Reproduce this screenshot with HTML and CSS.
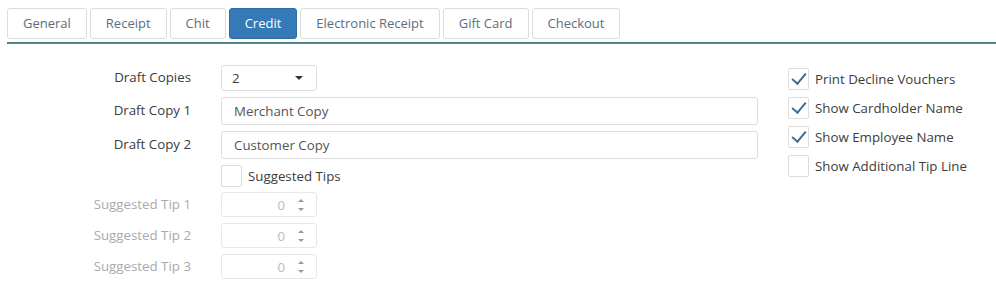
FILE: index.html
```html
<!DOCTYPE html>
<html lang="en">
<head>
    <meta charset="UTF-8">
    <title>Credit Settings</title>
    <link rel="stylesheet" href="styles.css">
</head>
<body>
    <div class="page">
        <ul class="tabs">
            <li>General</li>
            <li>Receipt</li>
            <li>Chit</li>
            <li class="active">Credit</li>
            <li>Electronic Receipt</li>
            <li>Gift Card</li>
            <li>Checkout</li>
        </ul>
        <div class="panel">
            <div class="left">
                <div class="row">
                    <label>Draft Copies</label>
                    <div class="select">2 <span class="caret"></span></div>
                </div>
                <div class="row">
                    <label>Draft Copy 1</label>
                    <div class="text">Merchant Copy</div>
                </div>
                <div class="row">
                    <label>Draft Copy 2</label>
                    <div class="text">Customer Copy</div>
                </div>
                <div class="row check-row">
                    <label></label>
                    <div class="check"><span class="box"></span> Suggested Tips</div>
                </div>
                <div class="row muted">
                    <label>Suggested Tip 1</label>
                    <div class="spin">0 <span class="arrows"><i class="up"></i><i class="down"></i></span></div>
                </div>
                <div class="row muted">
                    <label>Suggested Tip 2</label>
                    <div class="spin">0 <span class="arrows"><i class="up"></i><i class="down"></i></span></div>
                </div>
                <div class="row muted">
                    <label>Suggested Tip 3</label>
                    <div class="spin">0 <span class="arrows"><i class="up"></i><i class="down"></i></span></div>
                </div>
            </div>
            <div class="right">
                <div class="check"><span class="box checked"></span> Print Decline Vouchers</div>
                <div class="check"><span class="box checked"></span> Show Cardholder Name</div>
                <div class="check"><span class="box checked"></span> Show Employee Name</div>
                <div class="check"><span class="box"></span> Show Additional Tip Line</div>
            </div>
        </div>
    </div>
</body>
</html>
```

FILE: styles.css
```css
body {
    margin: 0;
    background: #fff;
    font-family: "Open Sans", "Noto Sans", sans-serif;
    font-size: 13.3px;
    color: #3c3c3c;
}
.page {
    padding: 8px 0 0 7px;
}
.tabs {
    list-style: none;
    margin: 0;
    padding: 0;
    display: flex;
    gap: 3px;
    border-bottom: 2px solid #4f858c;
    padding-bottom: 3px;
    font-size: 13px;
}
.tabs li {
    height: 29px;
    line-height: 29px;
    padding: 0 15px;
    border: 1px solid #dcdcdc;
    border-radius: 3px;
    color: #5d6d7e;
}
.tabs li.active {
    background: #337ab7;
    border-color: #2e6da4;
    color: #fff;
}
.panel {
    display: flex;
    padding-top: 21px;
}
.left {
    width: 781px;
}
.row {
    display: flex;
    align-items: center;
    margin-bottom: 6px;
}
.row label {
    flex: none;
    width: 214px;
    text-align: right;
    padding-right: 30px;
    padding-bottom: 2px;
    box-sizing: border-box;
}
.muted label {
    color: #aaa;
}
.select,
.spin {
    width: 96px;
    height: 26px;
    box-sizing: border-box;
    border: 1px solid #ddd;
    border-radius: 3px;
    display: flex;
    align-items: center;
    padding: 0 10px;
}
.caret {
    margin-left: auto;
    border-top: 4px solid #333;
    border-left: 4px solid transparent;
    border-right: 4px solid transparent;
    margin-right: 3px;
}
.text {
    width: 537px;
    height: 28px;
    box-sizing: border-box;
    border: 1px solid #ddd;
    border-radius: 3px;
    padding: 0 12px;
    line-height: 26px;
    color: #555;
}
.spin {
    height: 25px;
    justify-content: flex-end;
    color: #bbb;
    border-color: #e8e8e8;
    padding-right: 12px;
}
.arrows {
    display: flex;
    flex-direction: column;
    gap: 6px;
    margin-left: 13px;
}
.arrows i {
    display: block;
    border-left: 3px solid transparent;
    border-right: 3px solid transparent;
}
.arrows .up {
    border-bottom: 3px solid #999;
}
.arrows .down {
    border-top: 3px solid #999;
}
.check {
    display: flex;
    align-items: center;
    gap: 6px;
}
.box {
    width: 21px;
    height: 22px;
    box-sizing: border-box;
    border: 1px solid #ddd;
    border-radius: 2px;
    position: relative;
}
.box.checked::after {
    content: "";
    position: absolute;
    left: 6px;
    top: 1px;
    width: 6px;
    height: 12px;
    border-right: 2px solid #3a6c96;
    border-bottom: 2px solid #3a6c96;
    transform: rotate(40deg);
}
.check-row {
    margin-top: 1px;
    margin-bottom: 5px;
}
.right {
    padding-top: 3px;
    display: flex;
    flex-direction: column;
    gap: 7px;
}
```
